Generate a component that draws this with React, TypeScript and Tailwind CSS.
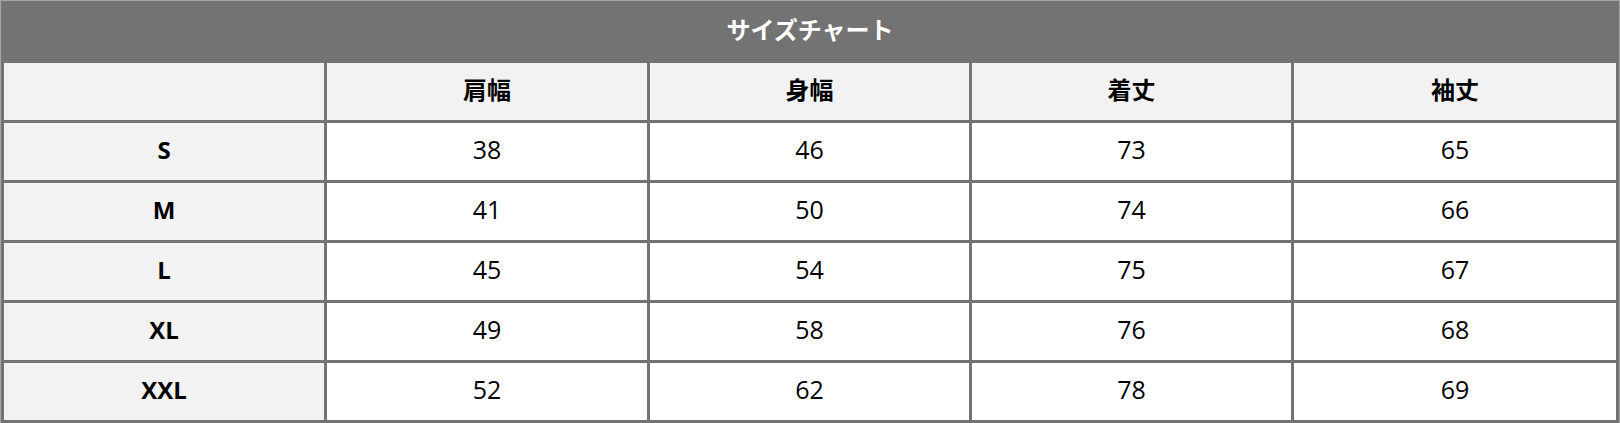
const columns = ["肩幅", "身幅", "着丈", "袖丈"];

const rows = [
  { size: "S", values: [38, 46, 73, 65] },
  { size: "M", values: [41, 50, 74, 66] },
  { size: "L", values: [45, 54, 75, 67] },
  { size: "XL", values: [49, 58, 76, 68] },
  { size: "XXL", values: [52, 62, 78, 69] },
];

export default function App() {
  return (
    <div
      className="w-[1620px] h-[423px] bg-white"
      style={{ fontFamily: '"Open Sans", "Noto Sans CJK JP", sans-serif' }}
    >
      <div className="border border-[#a6a6a6]">
        <table className="w-full table-fixed border-collapse text-center text-black">
          <colgroup>
            <col className="w-[323px]" />
            <col className="w-[323px]" />
            <col className="w-[322px]" />
            <col className="w-[322px]" />
            <col />
          </colgroup>
          <thead>
            <tr>
              <th
                colSpan={5}
                className="h-[59px] pb-[4px] bg-[#737373] border-[3px] border-[#737373] text-white text-[24px] font-bold"
              >
                サイズチャート
              </th>
            </tr>
            <tr>
              <th className="h-[60px] bg-[#f2f2f2] border-[3px] border-[#737373]" />
              {columns.map((c) => (
                <th
                  key={c}
                  className="h-[60px] pb-[4px] bg-[#f2f2f2] border-[3px] border-[#737373] text-[24px] font-bold"
                >
                  {c}
                </th>
              ))}
            </tr>
          </thead>
          <tbody>
            {rows.map((r) => (
              <tr key={r.size}>
                <th className="h-[60px] pb-[4px] bg-[#f2f2f2] border-[3px] border-[#737373] text-[24px] font-bold">
                  {r.size}
                </th>
                {r.values.map((v, i) => (
                  <td
                    key={i}
                    className="h-[60px] pb-[4px] bg-white border-[3px] border-[#737373] text-[25px]"
                  >
                    {v}
                  </td>
                ))}
              </tr>
            ))}
          </tbody>
        </table>
      </div>
    </div>
  );
}
